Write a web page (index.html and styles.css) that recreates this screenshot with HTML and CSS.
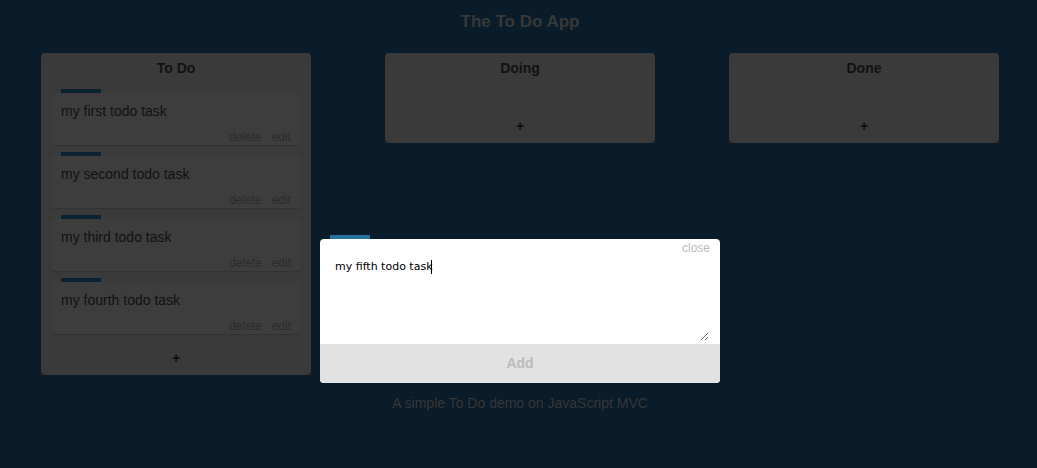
FILE: index.html
```html
<!DOCTYPE html>
<html lang="en">
<head>
<meta charset="utf-8">
<title>The To Do App</title>
<link rel="stylesheet" href="styles.css">
</head>
<body>
<div class="page">
  <h1 class="app-title">The To Do App</h1>
  <div class="board">
    <section class="column">
      <h2 class="column-title">To Do</h2>
      <div class="list">
        <div class="task">
          <div class="task-bar"></div>
          <div class="task-card">
            <div class="task-text">my first todo task</div>
            <div class="task-actions"><span>delete</span><span>edit</span></div>
          </div>
        </div>
        <div class="task">
          <div class="task-bar"></div>
          <div class="task-card">
            <div class="task-text">my second todo task</div>
            <div class="task-actions"><span>delete</span><span>edit</span></div>
          </div>
        </div>
        <div class="task">
          <div class="task-bar"></div>
          <div class="task-card">
            <div class="task-text">my third todo task</div>
            <div class="task-actions"><span>delete</span><span>edit</span></div>
          </div>
        </div>
        <div class="task">
          <div class="task-bar"></div>
          <div class="task-card">
            <div class="task-text">my fourth todo task</div>
            <div class="task-actions"><span>delete</span><span>edit</span></div>
          </div>
        </div>
      </div>
      <div class="add-task">+</div>
    </section>
    <section class="column">
      <h2 class="column-title">Doing</h2>
      <div class="list"></div>
      <div class="add-task">+</div>
    </section>
    <section class="column">
      <h2 class="column-title">Done</h2>
      <div class="list"></div>
      <div class="add-task">+</div>
    </section>
  </div>
  <p class="footer">A simple To Do demo on JavaScript MVC</p>

  <div class="modal">
    <div class="modal-bar"></div>
    <div class="modal-head"><span class="close">close</span></div>
    <div class="modal-field">
      <textarea class="modal-input">my fifth todo task</textarea>
      <span class="caret"></span>
    </div>
    <div class="modal-add">Add</div>
  </div>
</div>
</body>
</html>
```
FILE: styles.css
```css
html, body {
  margin: 0;
  padding: 0;
  background: #0a1c29;
  height: 100%;
}
body {
  font-family: "Liberation Sans", Arial, sans-serif;
  color: #111;
}
.page {
  position: relative;
  width: 1032px;
  margin-left: 4px;
}
.app-title {
  margin: 0;
  padding-top: 12px;
  height: 53px;
  box-sizing: border-box;
  text-align: center;
  font-size: 17px;
  line-height: 20px;
  font-weight: bold;
  color: #383838;
}
.board {
  display: grid;
  grid-template-columns: repeat(3, 344px);
  align-items: start;
}
.column {
  justify-self: center;
  width: 270px;
  background: #3a3a3a;
  border-radius: 4px;
}
.column-title {
  margin: 0;
  height: 32px;
  padding-top: 7px;
  box-sizing: border-box;
  text-align: center;
  font-size: 14px;
  line-height: 16px;
  font-weight: bold;
  color: #121212;
}
.list {
  padding: 4px 10px 0;
  min-height: 24px;
  box-sizing: border-box;
}
.task {
  margin-bottom: 7px;
}
.task-bar {
  width: 40px;
  height: 0;
  margin-left: 10px;
  border-top: 4px solid #0a2232;
}
.task-card {
  height: 52px;
  box-sizing: border-box;
  background: #3d3d3d;
  border-radius: 3px;
  box-shadow: 0 1px 1px rgba(0, 0, 0, 0.15);
}
.task-text {
  padding: 10px 10px 0;
  font-size: 14px;
  line-height: 16px;
  color: #121212;
}
.task-actions {
  display: flex;
  justify-content: flex-end;
  gap: 10px;
  margin-top: 11px;
  padding: 0 10px 1px;
  font-size: 12px;
  line-height: 14px;
  color: #2c2c2c;
}
.add-task {
  height: 34px;
  text-align: center;
  font-size: 14px;
  font-weight: bold;
  line-height: 34px;
  color: #111;
}
.footer {
  margin: 20px 0 0;
  text-align: center;
  font-size: 14px;
  line-height: 16px;
  color: #363636;
}
.modal {
  position: absolute;
  left: 316px;
  top: 239px;
  width: 400px;
  background: #fff;
  border-radius: 4px;
}
.modal-bar {
  position: absolute;
  left: 10px;
  top: -4px;
  width: 40px;
  height: 4px;
  background: #28709e;
}
.modal-head {
  display: flex;
  justify-content: flex-end;
  height: 18px;
  padding-right: 10px;
}
.close {
  font-size: 12px;
  line-height: 18px;
  color: #bbb;
}
.modal-field {
  position: relative;
  margin: 0 11px 0 13px;
}
.modal-input {
  display: block;
  width: 376px;
  height: 84px;
  box-sizing: border-box;
  padding: 3px 2px 2px;
  border: none;
  outline: none;
  font-family: "DejaVu Sans", sans-serif;
  font-size: 11px;
  line-height: 14px;
  color: #000;
  background: #fff;
}
.caret {
  position: absolute;
  left: 98px;
  top: 3px;
  width: 1px;
  height: 14px;
  background: #000;
}
.modal-add {
  margin-top: 3px;
  height: 39px;
  background: #e2e2e2;
  border-radius: 0 0 4px 4px;
  text-align: center;
  font-size: 14px;
  font-weight: bold;
  line-height: 39px;
  color: #bbb;
}
```
